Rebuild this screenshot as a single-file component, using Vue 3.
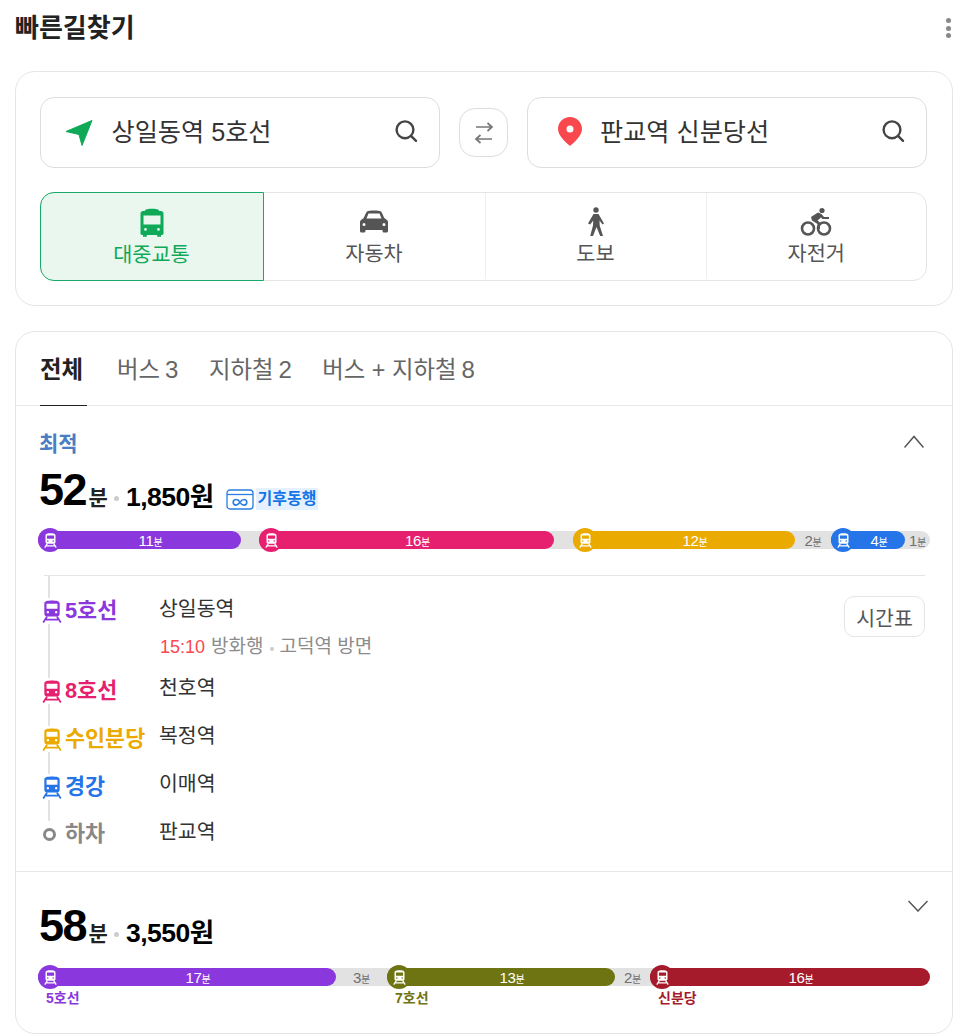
<template>
  <div class="page">
    <header class="head">
      <h1 class="head__title">빠른길찾기</h1>
      <button class="head__more"><i></i><i></i><i></i></button>
    </header>

    <section class="card search">
      <div class="search__row">
        <div class="field">
          <svg class="field__icon" width="28" height="28" viewBox="0 0 28 28">
            <path d="M27 1.500 1 12.500l13 3 3 11z" fill="#0fa958" stroke="#0fa958" stroke-width="1" stroke-linejoin="round" />
          </svg>
          <span class="field__text">상일동역 5호선</span>
          <svg class="field__search" width="24" height="24" viewBox="0 0 24 24" fill="none" stroke="#444" stroke-width="2.400">
            <circle cx="11" cy="10.800" r="8.400" />
            <path stroke-linecap="round" d="M17 16.800l5 5" />
          </svg>
        </div>
        <button class="swap">
          <svg width="24" height="24" viewBox="0 0 24 24" fill="none" stroke="#777" stroke-width="1.700">
            <path d="M4 6h15.500M15.500 2l4.500 4-4.500 4" />
            <path d="M20 18H4.500M8.500 14 4 18l4.500 4" />
          </svg>
        </button>
        <div class="field">
          <svg class="field__icon field__icon--pin" width="24" height="29" viewBox="0 0 24 29">
            <path fill-rule="evenodd" d="M12 0C5.400 0 0 5.300 0 11.800c0 6.600 7 13.300 12 17.200 5-3.900 12-10.600 12-17.200C24 5.300 18.600 0 12 0zm0 8.600a3.500 3.500 0 1 1 0 7 3.500 3.500 0 0 1 0-7z" fill="#f9474e" />
          </svg>
          <span class="field__text">판교역 신분당선</span>
          <svg class="field__search" width="24" height="24" viewBox="0 0 24 24" fill="none" stroke="#444" stroke-width="2.400">
            <circle cx="11" cy="10.800" r="8.400" />
            <path stroke-linecap="round" d="M17 16.800l5 5" />
          </svg>
        </div>
      </div>

      <div class="modes">
        <button class="mode mode--on">
          <svg width="26" height="30" viewBox="0 0 26 30">
            <path fill-rule="evenodd" fill="#0fa958" d="M7 1.500C8 1 10 .8 13 .8s5 .2 6 .7c.6.300 1 .7 1.200 1.500H22c1.400 0 2.500 1.100 2.500 2.500v20c0 .8-.6 1.400-1.400 1.400H22v1.800h-3.800v-1.800H7.800v1.800H4v-1.800H2.900c-.8 0-1.400-.6-1.400-1.400v-20C1.500 4.100 2.600 3 4 3h1.800C6 2.200 6.400 1.800 7 1.500zM4.500 7.500v9h17v-9zM6.500 20a1.400 1.400 0 1 0 0 2.800 1.400 1.400 0 0 0 0-2.800zm13 0a1.400 1.400 0 1 0 0 2.800 1.400 1.400 0 0 0 0-2.800z" />
          </svg>
          <span>대중교통</span>
        </button>
        <button class="mode">
          <svg width="28" height="30" viewBox="0 -3 28 30">
            <path fill-rule="evenodd" fill="#555" d="M7 1.500C8 .8 11 .5 14 .5s6 .3 7 1c1 .8 2.500 5 3.300 6.500L27 10c.6.500 1 1.300 1 2v9c0 .8-.6 1.500-1.500 1.500H24c-.8 0-1.500-.7-1.500-1.500v-1h-17v1c0 .8-.7 1.500-1.500 1.500H1.500C.6 22.500 0 21.800 0 21v-9c0-.7.4-1.500 1-2l2.700-2C4.500 6.500 6 2.300 7 1.500zM8.500 3.500 6.500 8.500h15l-2-5zM4 13a1.500 1.500 0 1 0 0 3 1.500 1.500 0 0 0 0-3zm20 0a1.500 1.500 0 1 0 0 3 1.500 1.500 0 0 0 0-3z" />
          </svg>
          <span>자동차</span>
        </button>
        <button class="mode">
          <svg width="18" height="30" viewBox="0 0 18 30">
            <circle cx="9" cy="3" r="2.700" fill="#555" />
            <path fill="#555" d="M6.500 7h5L17 16.500l-1.500 1-3-4 .2 5L16 29h-2.800L9.500 20 6 29H3.200L6 18.500l.2-5-3 4L1 16.500z" />
          </svg>
          <span>도보</span>
        </button>
        <button class="mode">
          <svg width="34" height="30" viewBox="0 0 34 30">
            <circle cx="9" cy="21.500" r="6" fill="none" stroke="#555" stroke-width="2.600" />
            <circle cx="25" cy="21.500" r="6" fill="none" stroke="#555" stroke-width="2.600" />
            <circle cx="23" cy="3.500" r="2.600" fill="#555" />
            <path fill="#555" d="M12 10l7-4.500 3.500 1.500 2.500 3h5v2h-6.500L22 10.500l-3.500 3 2.500 2v6.500h-2.500v-5L13 13.500z" />
          </svg>
          <span>자전거</span>
        </button>
      </div>
    </section>

    <section class="card result">
      <nav class="tabs">
        <span class="tab tab--on">전체</span>
        <span class="tab">버스<span class="tab__n">3</span></span>
        <span class="tab">지하철<span class="tab__n">2</span></span>
        <span class="tab">버스 + 지하철<span class="tab__n">8</span></span>
      </nav>

      <article class="route route--open">
        <div class="route__top">
          <div class="route__badge">최적</div>
          <svg class="route__chevron" width="20" height="13" viewBox="0 0 20 13" fill="none" stroke="#555" stroke-width="1.500">
            <path d="M.5 12.500 10 1.500l9.500 11" />
          </svg>
        </div>
        <div class="summary">
          <span class="summary__min">52</span><span class="summary__unit">분</span>
          <span class="summary__dot"></span>
          <span class="summary__fare">1,850원</span>
          <span class="eco">
            <svg width="28" height="21" viewBox="0 0 28 21" fill="none" stroke="#2a7de1" stroke-width="1.300">
              <rect x="1" y="1" width="26" height="19" rx="3" />
              <path d="M1 5.500h26" />
              <path stroke-width="1.600" d="M13.500 12.500c-1-1.500-2-2-3.500-2a2.800 2.800 0 0 0 0 5.600c1.600 0 2.700-1 4-2.800s2.400-2.800 4-2.800a2.800 2.800 0 0 1 0 5.600c-1.500 0-2.500-.5-3.500-2" />
            </svg>
            <span class="eco__text">기후동행</span>
          </span>
        </div>
        <div class="bar">
          <template v-for="(s, i) in firstBar" :key="i">
            <div v-if="s.color" class="seg" :style="{ width: s.w + 'px', background: s.color }">
              <span class="seg__dot" :style="{ background: s.color }">
                <svg width="13" height="15" viewBox="0 0 18 21">
                  <path fill="#fff" fill-rule="evenodd" :d="trainBody" />
                  <path fill="none" stroke="#fff" stroke-width="1.800" :d="trainRails" />
                </svg>
              </span>
              <span class="seg__label">{{ s.min }}<small>분</small></span>
            </div>
            <div v-else class="gap" :style="{ width: s.w + 'px' }">
              <span v-if="s.min">{{ s.min }}<small>분</small></span>
            </div>
          </template>
        </div>

        <div class="steps">
          <div v-for="step in steps" :key="step.name" class="step" :class="{ 'step--start': step.sub }">
            <div class="step__line" :style="{ color: step.color }">
              <span class="step__icon" :class="{ 'step__icon--ring': !step.train }">
                <svg v-if="step.train" width="20" height="23" viewBox="0 0 18 21">
                  <path fill="currentColor" fill-rule="evenodd" :d="trainBody" />
                  <path fill="none" stroke="currentColor" stroke-width="1.600" :d="trainRails" />
                </svg>
                <span v-else class="step__ring"></span>
              </span>
              <span class="step__name">{{ step.name }}</span>
            </div>
            <div class="step__body">
              <div class="step__station">{{ step.station }}</div>
              <div v-if="step.sub" class="step__sub">
                <span class="step__time">15:10</span> 방화행
                <span class="step__dot"></span>
                고덕역 방면
              </div>
            </div>
            <button v-if="step.sub" class="timetable">시간표</button>
          </div>
        </div>
      </article>

      <article class="route route--closed">
        <svg class="route__chevron route__chevron--closed" width="20" height="12" viewBox="0 0 20 12" fill="none" stroke="#555" stroke-width="1.500">
          <path d="M.5 1 10 11l9.500-10" />
        </svg>
        <div class="summary">
          <span class="summary__min">58</span><span class="summary__unit">분</span>
          <span class="summary__dot"></span>
          <span class="summary__fare">3,550원</span>
        </div>
        <div class="bar">
          <template v-for="(s, i) in secondBar" :key="i">
            <div v-if="s.color" class="seg" :style="{ width: s.w + 'px', background: s.color }">
              <span class="seg__dot" :style="{ background: s.color }">
                <svg width="13" height="15" viewBox="0 0 18 21">
                  <path fill="#fff" fill-rule="evenodd" :d="trainBody" />
                  <path fill="none" stroke="#fff" stroke-width="1.800" :d="trainRails" />
                </svg>
              </span>
              <span class="seg__label">{{ s.min }}<small>분</small></span>
              <span class="seg__name" :style="{ color: s.color }">{{ s.name }}</span>
            </div>
            <div v-else class="gap" :style="{ width: s.w + 'px' }">
              <span>{{ s.min }}<small>분</small></span>
            </div>
          </template>
        </div>
      </article>
    </section>
  </div>
</template>

<script setup>
const trainBody = 'M2 3.500C2 1 5 .5 9 .5s7 .5 7 3v9c0 1.400-1.100 2.500-2.500 2.500h-9C3.100 15 2 13.900 2 12.500zM4 3.500V8h10V3.500zM5.200 10a1.100 1.100 0 1 0 0 2.200 1.100 1.100 0 0 0 0-2.200zm7.600 0a1.100 1.100 0 1 0 0 2.200 1.100 1.100 0 0 0 0-2.200z'
const trainRails = 'M4.500 15 1 20.500M13.500 15 17 20.500M3.500 18h11'

const firstBar = [
  { w: 203, min: 11, color: '#8a38dd' },
  { w: 18 },
  { w: 295, min: 16, color: '#e61f6e' },
  { w: 19 },
  { w: 222, min: 12, color: '#ebaa00' },
  { w: 36, min: 2 },
  { w: 74, min: 4, color: '#2574e8' },
  { w: 25, min: 1 },
]

const secondBar = [
  { w: 298, min: 17, color: '#8a38dd', name: '5호선' },
  { w: 51, min: 3 },
  { w: 228, min: 13, color: '#6f7412', name: '7호선' },
  { w: 35, min: 2 },
  { w: 280, min: 16, color: '#a61b2b', name: '신분당' },
]

const steps = [
  { name: '5호선', station: '상일동역', color: '#8a38dd', train: true, sub: true },
  { name: '8호선', station: '천호역', color: '#e61f6e', train: true },
  { name: '수인분당', station: '복정역', color: '#ebaa00', train: true },
  { name: '경강', station: '이매역', color: '#2574e8', train: true },
  { name: '하차', station: '판교역', color: '#888', train: false },
]
</script>

<style>
html,
body {
  margin: 0;
  background: #fff;
}
</style>

<style scoped>
.page {
  width: 966px;
  height: 1035px;
  overflow: hidden;
  box-sizing: border-box;
  padding: 0 13px 0 15px;
  font-family: "Liberation Sans", "Noto Sans CJK KR", sans-serif;
  color: #333;
}
button {
  font-family: inherit;
  padding: 0;
  background: none;
  border: none;
}
.head {
  height: 71px;
  display: flex;
  justify-content: space-between;
  align-items: flex-start;
}
.head__title {
  margin: 10px 0 0;
  font-size: 26px;
  line-height: 36px;
  font-weight: 700;
  color: #222;
}
.head__more {
  margin: 18px 2px 0 0;
  display: flex;
  flex-direction: column;
  gap: 2.500px;
}
.head__more i {
  display: block;
  width: 5px;
  height: 5px;
  border-radius: 50%;
  background: #888;
}
.card {
  border: 1px solid #e5e5e5;
  border-radius: 20px;
  background: #fff;
}
.search {
  padding: 25px 25px 24px 24px;
  height: 235px;
  box-sizing: border-box;
}
.search__row {
  display: flex;
  align-items: center;
  gap: 19px;
}
.field {
  flex: 1;
  height: 71px;
  box-sizing: border-box;
  border: 1.500px solid #ddd;
  border-radius: 14px;
  display: flex;
  align-items: center;
  padding: 0 21.500px 0 23.500px;
}
.field__icon {
  flex-shrink: 0;
  margin-right: 19px;
}
.field__icon--pin {
  margin: 0 18px 2px 6.500px;
}
.field__text {
  flex: 1;
  font-size: 25.200px;
  color: #333;
  padding-bottom: 5px;
}
.field__search {
  flex-shrink: 0;
  margin-bottom: 3px;
}
.swap {
  width: 49px;
  height: 49px;
  flex-shrink: 0;
  border: 1.500px solid #ddd;
  border-radius: 16px;
  display: flex;
  align-items: center;
  justify-content: center;
  box-sizing: border-box;
}
.modes {
  margin-top: 24px;
  display: grid;
  grid-template-columns: 222.500px 221px 221px 1fr;
  height: 89px;
  box-sizing: border-box;
  border: 1.500px solid #e5e5e5;
  border-radius: 14px;
}
.mode {
  display: flex;
  flex-direction: column;
  align-items: center;
  gap: 3px;
  padding-top: 14px;
  height: 86px;
  box-sizing: border-box;
  color: #555;
  font-size: 20.800px;
  line-height: 28px;
}
.mode svg {
  display: block;
}
.mode + .mode + .mode {
  border-left: 1.500px solid #eee;
}
.mode--on {
  margin: -1.500px 0 -1.500px -1.500px;
  height: 89px;
  padding-top: 15px;
  border: 1.500px solid #1aa86a;
  border-radius: 14px 0 0 14px;
  background: #e9f7ef;
  color: #0fa958;
}
.result {
  margin-top: 25px;
  height: 703px;
  box-sizing: border-box;
}
.tabs {
  height: 74px;
  box-sizing: border-box;
  border-bottom: 1px solid #e8e8e8;
  display: flex;
  gap: 30.500px;
  padding-left: 24px;
}
.tab {
  height: 74px;
  box-sizing: border-box;
  padding: 20px 0 0;
  font-size: 23.400px;
  line-height: 36px;
  color: #666;
}
.tab__n {
  font-size: 24px;
  margin-left: 5px;
}
.tab--on {
  font-weight: 700;
  color: #222;
  border-bottom: 1.500px solid #222;
  width: 47px;
  margin-right: -0.500px;
}
.route {
  padding: 0 24px;
  box-sizing: border-box;
}
.route--open {
  height: 466px;
  border-bottom: 1px solid #e8e8e8;
}
.route__top {
  display: flex;
  justify-content: space-between;
  padding-top: 20px;
  height: 32px;
  align-items: center;
}
.route__badge {
  font-size: 21px;
  font-weight: 700;
  color: #4a7dc2;
  margin-left: -1px;
}
.route__chevron {
  margin: -2px 4px 0 0;
}
.summary {
  display: flex;
  align-items: baseline;
  margin-top: 7px;
  margin-left: -1px;
  line-height: 50px;
  height: 50px;
  color: #000;
}
.summary__min {
  font-size: 45px;
  font-weight: 700;
  letter-spacing: -1.500px;
}
.summary__unit {
  font-size: 21px;
  font-weight: 700;
  margin-left: 2.500px;
  color: #222;
}
.summary__dot {
  width: 5px;
  height: 5px;
  border-radius: 50%;
  background: #ccc;
  margin: 0 7px 0 6px;
  align-self: center;
  position: relative;
  top: 8px;
}
.summary__fare {
  font-size: 26.500px;
  font-weight: 700;
  letter-spacing: -0.500px;
  position: relative;
  top: 1px;
}
.eco {
  margin-left: 12px;
  display: inline-flex;
  align-items: center;
  gap: 2px;
  align-self: center;
  position: relative;
  top: 9px;
}
.eco svg {
  display: block;
}
.eco__text {
  font-size: 16px;
  font-weight: 700;
  line-height: 22px;
  color: #1374e8;
  background: #e5f1ff;
  padding: 0 2px;
}
.bar {
  margin: 16px 0 0 -2px;
  display: flex;
  width: 892px;
  height: 18px;
  background: #e2e2e2;
  border-radius: 9px;
}
.seg {
  position: relative;
  height: 18px;
  box-sizing: border-box;
  padding-left: 22px;
  border-radius: 9px;
  flex-shrink: 0;
  display: flex;
  align-items: center;
  justify-content: center;
}
.seg__dot {
  position: absolute;
  left: 0;
  top: -3px;
  width: 24px;
  height: 24px;
  border-radius: 50%;
  display: flex;
  align-items: center;
  justify-content: center;
}
.seg__label {
  font-size: 15px;
  color: #fff;
  letter-spacing: -0.300px;
}
.seg__label small,
.gap small {
  font-size: 10px;
}
.seg__name {
  position: absolute;
  left: 8px;
  top: 20px;
  font-size: 14px;
  line-height: 20px;
  font-weight: 700;
  white-space: nowrap;
}
.gap {
  height: 18px;
  flex-shrink: 0;
  display: flex;
  align-items: center;
  justify-content: center;
  font-size: 15px;
  color: #707070;
  letter-spacing: -0.300px;
}
.steps {
  position: relative;
  margin: 26px 3px 0 4px;
  padding-top: 20px;
  border-top: 1px solid #e5e5e5;
}
.steps::before {
  content: "";
  position: absolute;
  left: 4px;
  top: 0;
  bottom: 30px;
  width: 2px;
  background: #e2e2e2;
}
.step {
  position: relative;
  display: flex;
  align-items: flex-start;
  height: 48px;
}
.step--start {
  height: 80px;
}
.step__line {
  width: 117px;
  margin: 1px 0 0 -2px;
  flex-shrink: 0;
  display: flex;
  align-items: center;
  font-size: 21.800px;
  line-height: 28px;
  font-weight: 700;
  gap: 3px;
}
.step:last-child .step__line {
  margin-top: 0;
}
.step__icon {
  width: 20px;
  height: 26px;
  display: flex;
  align-items: center;
  justify-content: center;
  background: #fff;
  flex-shrink: 0;
}
.step__icon--ring {
  justify-content: flex-start;
  padding-left: 1px;
  box-sizing: border-box;
}
.step__ring {
  width: 13px;
  height: 13px;
  box-sizing: border-box;
  border: 3.500px solid #888;
  border-radius: 50%;
}
.step__body {
  flex: 1;
}
.step__station {
  font-size: 20.500px;
  line-height: 26px;
  color: #333;
  margin-top: -1px;
}
.step--start .step__station {
  margin-top: 0;
}
.step__sub {
  margin-top: 13px;
  font-size: 19px;
  line-height: 24px;
  color: #8c8c8c;
  display: flex;
  align-items: center;
  gap: 6px;
  margin-left: 1px;
}
.step__time {
  color: #f9474e;
  font-size: 18px;
}
.step__dot {
  width: 4px;
  height: 4px;
  border-radius: 50%;
  background: #ccc;
  margin: 3px 0 0;
}
.timetable {
  width: 81px;
  height: 41px;
  box-sizing: border-box;
  border: 1.500px solid #e5e5e5;
  border-radius: 10px;
  font-size: 20.500px;
  color: #555;
}
.route--closed {
  position: relative;
  padding-top: 29px;
}
.route--closed .summary {
  margin-top: 0;
}
.route--closed .bar {
  margin-top: 17px;
}
.route__chevron--closed {
  position: absolute;
  right: 24px;
  top: 28px;
  margin: 0;
}
</style>
